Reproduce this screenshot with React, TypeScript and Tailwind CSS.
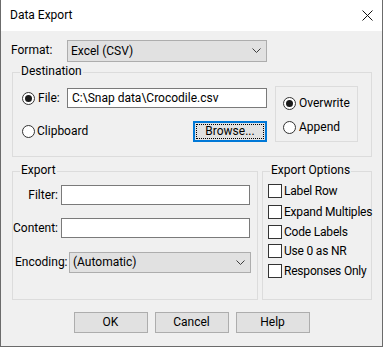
const font = "font-['Segoe_UI','Roboto',sans-serif]";

function Radio({ checked }: { checked?: boolean }) {
  return (
    <span className="flex h-[13px] w-[13px] shrink-0 items-center justify-center rounded-full border border-[#333333] bg-white">
      {checked && <span className="h-[7px] w-[7px] rounded-full bg-[#1a1a1a]" />}
    </span>
  );
}

function Check({ label, className }: { label: string; className?: string }) {
  return (
    <div className={`flex h-[14px] items-center whitespace-nowrap ${className ?? ""}`}>
      <span className="h-[14px] w-[14px] shrink-0 border border-[#333333] bg-white" />
      <span className="ml-[2px] leading-[14px] tracking-[-0.2px]">{label}</span>
    </div>
  );
}

function Chevron() {
  return (
    <svg width="9" height="6" viewBox="0 0 9 6" className="shrink-0">
      <path d="M0.5 0.5 L4.5 4.5 L8.5 0.5" fill="none" stroke="#3c3c3c" strokeWidth="1" />
    </svg>
  );
}

function Combo({ value, className }: { value: string; className: string }) {
  return (
    <div className={`flex items-center border border-[#adadad] bg-[#e1e1e1] pl-[3px] pr-[5px] ${className}`}>
      <span className="flex-1 leading-[15px]">{value}</span>
      <Chevron />
    </div>
  );
}

function Group({ title, className, children }: { title: string; className: string; children?: React.ReactNode }) {
  return (
    <div className={`relative border border-[#dcdcdc] ${className}`}>
      <span className="absolute -top-[9px] left-[7px] bg-[#f0f0f0] px-[1px] leading-[15px]">{title}</span>
      {children}
    </div>
  );
}

function Button({ children }: { children: React.ReactNode }) {
  return (
    <div className="flex h-[21px] w-[74px] items-center justify-center border border-[#adadad] bg-[#e1e1e1] leading-[15px]">
      {children}
    </div>
  );
}

export default function App() {
  return (
    <div className={`flex h-[347px] w-[383px] flex-col border-x border-b border-[#6b6b6b] bg-[#f0f0f0] text-[12px] text-black ${font}`}>
      {/* title bar */}
      <div className="flex h-[31px] shrink-0 items-center bg-white pl-[9px] pr-[9px]">
        <span className="flex-1 leading-[15px]">Data Export</span>
        <svg width="11" height="11" viewBox="0 0 11 11">
          <path d="M0.5 0.5 L10.5 10.5 M10.5 0.5 L0.5 10.5" stroke="#111111" strokeWidth="1" />
        </svg>
      </div>

      {/* format */}
      <div className="mt-[9px] flex h-[22px] pl-[10px]">
        <span className="w-[56px] pt-[3px] leading-[15px]">Format:</span>
        <Combo value="Excel (CSV)" className="h-[22px] w-[200px]" />
      </div>

      {/* destination */}
      <Group title="Destination" className="ml-[11px] mt-[10px] flex h-[85px] w-[360px]">
        <div className="w-[254px] pl-[9px] pt-[15px]">
          <div className="flex h-[20px] items-center">
            <Radio checked />
            <span className="ml-[3px] leading-[15px]">File:</span>
            <div className="ml-auto flex h-[20px] w-[200px] items-center border border-[#7a7a7a] bg-white pl-[4px] leading-[15px]">
              C:\Snap data\Crocodile.csv
            </div>
          </div>
          <div className="mt-[13px] flex h-[21px] items-center">
            <Radio />
            <span className="ml-[2px] leading-[15px]">Clipboard</span>
            <div className="ml-auto h-[21px] w-[74px] border-2 border-[#0078d7] bg-[#e1e1e1] p-px">
              <div className="flex h-full w-full items-center justify-center border border-dotted border-black leading-[15px]">
                Browse...
              </div>
            </div>
          </div>
        </div>
        <div className="ml-[8px] mt-[13px] h-[56px] w-[83px] border border-[#dcdcdc] pl-[7px] pt-[6px]">
          <div className="flex h-[20px] items-center">
            <Radio checked />
            <span className="ml-[3px] leading-[15px]">Overwrite</span>
          </div>
          <div className="mt-[4px] flex h-[20px] items-center">
            <Radio />
            <span className="ml-[3px] leading-[15px]">Append</span>
          </div>
        </div>
      </Group>

      {/* export + options */}
      <div className="ml-[11px] mt-[14px] flex">
        <Group title="Export" className="h-[129px] w-[246px]">
          <div className="mt-[13px] flex h-[20px] items-center">
            <span className="w-[45px] text-right leading-[15px]">Filter:</span>
            <div className="ml-[3px] h-[20px] w-[189px] border border-[#7a7a7a] bg-white" />
          </div>
          <div className="mt-[13px] flex h-[20px] items-center">
            <span className="w-[45px] overflow-hidden text-right leading-[15px] whitespace-nowrap">Content:</span>
            <div className="ml-[3px] h-[20px] w-[189px] border border-[#7a7a7a] bg-white" />
          </div>
          <div className="mt-[14px] flex h-[21px] items-center pl-[2px]">
            <span className="w-[54px] leading-[15px]">Encoding:</span>
            <Combo value="(Automatic)" className="h-[21px] w-[182px]" />
          </div>
        </Group>
        <Group title="Export Options" className="ml-[4px] h-[129px] w-[110px] pl-[5px]">
          <Check label="Label Row" className="mt-[12px]" />
          <Check label="Expand Multiples" className="mt-[7px]" />
          <Check label="Code Labels" className="mt-[6px]" />
          <Check label="Use 0 as NR" className="mt-[5px]" />
          <Check label="Responses Only" className="mt-[6px]" />
        </Group>
      </div>

      {/* buttons */}
      <div className="mt-[12px] flex justify-center gap-[7px]">
        <Button>OK</Button>
        <Button>Cancel</Button>
        <Button>Help</Button>
      </div>
    </div>
  );
}
